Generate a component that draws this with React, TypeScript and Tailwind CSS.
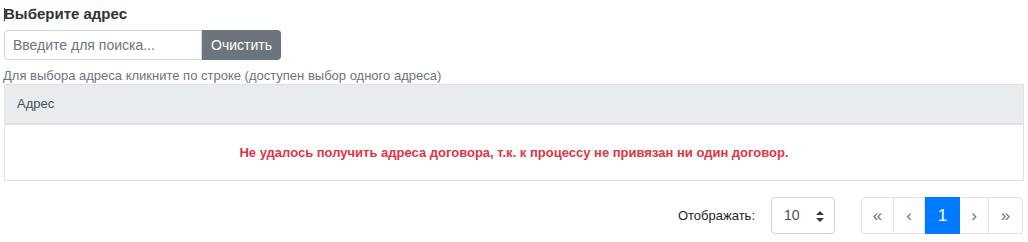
import React, { useState } from 'react';

const App = () => {
  const [query, setQuery] = useState('');
  const [perPage, setPerPage] = useState('10');

  return (
    <div className="w-[1028px] h-[242px] bg-white px-[4px] pt-[4px] text-[#212529]" style={{ fontFamily: '"Liberation Sans", Arial, sans-serif' }}>
      {/* Heading */}
      <div className="flex items-center h-[20px]">
        <span className="w-px h-[13px] bg-[#333] -mr-px"></span>
        <h5 className="text-[15px] font-bold leading-[20px] text-[#333]">Выберите адрес</h5>
      </div>

      {/* Search */}
      <div className="flex mt-[6px] h-[30px]">
        <input
          type="text"
          value={query}
          onChange={(e) => setQuery(e.target.value)}
          placeholder="Введите для поиска..."
          className="w-[198px] h-[30px] border border-[#ced4da] rounded-l-[4px] px-[8px] text-[14px] text-[#495057] placeholder:text-[#6c757d] outline-none"
        />
        <button
          onClick={() => setQuery('')}
          className="w-[79px] h-[30px] bg-[#6c757d] text-white text-[14px] rounded-r-[4px]"
        >
          Очистить
        </button>
      </div>

      {/* Hint */}
      <div className="text-[13px] leading-[16px] text-[#6c757d] mt-[8px] -ml-px">
        Для выбора адреса кликните по строке (доступен выбор одного адреса)
      </div>

      {/* Table */}
      <div className="w-[1020px] border border-[#dee2e6]">
        <div className="h-[40px] bg-[#e9ecef] border-b-2 border-[#dee2e6] flex items-center px-[12px] text-[13px] text-[#495057]">
          Адрес
        </div>
        <div className="h-[55px] flex items-center justify-center text-[13px] font-bold text-[#dc3545]">
          Не удалось получить адреса договора, т.к. к процессу не привязан ни один договор.
        </div>
      </div>

      {/* Footer */}
      <div className="flex justify-end items-center mt-[16px] pr-[1px]">
        <span className="text-[13px] text-[#212529] mr-[16px]">Отображать:</span>
        <div className="relative w-[64px] h-[37px] border border-[#ced4da] rounded-[4px] flex items-center pl-[12px] text-[14px] text-[#495057]">
          <select
            value={perPage}
            onChange={(e) => setPerPage(e.target.value)}
            className="absolute inset-0 opacity-0"
          >
            <option>10</option>
            <option>25</option>
            <option>50</option>
          </select>
          <span>{perPage}</span>
          <svg className="absolute right-[10px] top-[13px]" width="8" height="11" viewBox="0 0 8 11">
            <path d="M4 0L8 4H0z" fill="#343a40" />
            <path d="M4 11L0 7h8z" fill="#343a40" />
          </svg>
        </div>
        <div className="flex ml-[26px] h-[37px] text-[17px]">
          <div className="w-[33px] flex items-center justify-center border border-[#dee2e6] rounded-l-[4px] text-[#6c757d]">«</div>
          <div className="w-[31px] flex items-center justify-center border border-l-0 border-[#dee2e6] text-[#6c757d]">‹</div>
          <div className="w-[35px] flex items-center justify-center bg-[#007bff] text-white text-[17px]">1</div>
          <div className="w-[29px] flex items-center justify-center border border-l-0 border-[#dee2e6] text-[#6c757d]">›</div>
          <div className="w-[34px] flex items-center justify-center border border-l-0 border-[#dee2e6] rounded-r-[4px] text-[#6c757d]">»</div>
        </div>
      </div>
    </div>
  );
};

export default App;
